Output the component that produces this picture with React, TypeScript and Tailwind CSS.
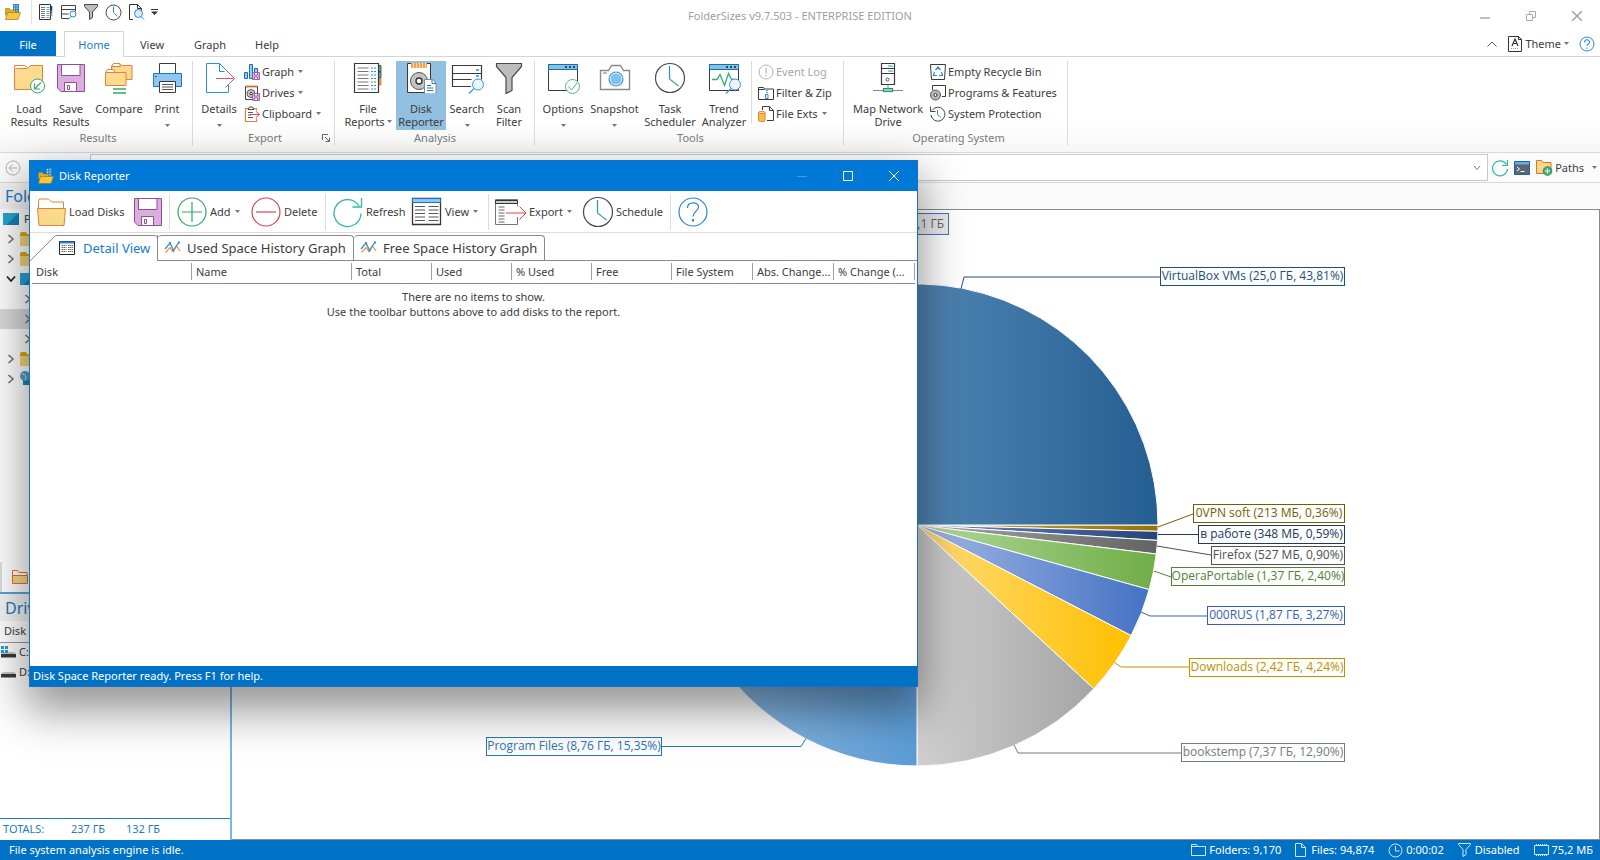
import React from 'react';

type IconProps = { className?: string };

/* ---------- Small shared glyphs ---------- */

const CaretDown: React.FC<IconProps> = ({ className = '' }) => (
  <svg viewBox="0 0 5 3" className={`w-[5px] h-[3px] shrink-0 ${className}`} fill="#777">
    <path d="M0 0h5L2.5 3z" />
  </svg>
);

const ChevronRight = () => (
  <svg viewBox="0 0 8 10" className="w-2 h-[10px] shrink-0" fill="none" stroke="#767676" strokeWidth="1.6">
    <path d="M1.5 1l4.500 4-4.500 4" />
  </svg>
);

const ChevronDown = () => (
  <svg viewBox="0 0 10 8" className="w-[10px] h-2 shrink-0" fill="none" stroke="#222" strokeWidth="1.8">
    <path d="M1 1.500l4 4.500 4-4.500" />
  </svg>
);

const AppIcon: React.FC<IconProps> = ({ className = 'w-4 h-4' }) => (
  <svg viewBox="0 0 16 16" className={className}>
    <rect x="8" y="0" width="6" height="12" fill="#2f86c5" />
    <path d="M9.500 1v10M12 1v10" stroke="#bfe3f7" strokeDasharray="1.500 1" />
    <path d="M0.500 4.500h4l1 1.500h5v5h-10z" fill="#e0ab2c" stroke="#a87610" strokeWidth=".6" />
    <path d="M0.500 15.500l2-7h13l-2.500 7z" fill="#f5c842" stroke="#a87610" strokeWidth=".7" />
  </svg>
);

const FloppyIcon: React.FC<IconProps> = ({ className = 'w-8 h-8' }) => (
  <svg viewBox="0 0 32 32" className={className} stroke="#8d4f97">
    <path d="M2.500 2.500h27v27H6l-3.500-3.500z" fill="#dcaee0" />
    <path d="M6.500 2.500h18.500v11H6.500z" fill="#fff" />
    <path d="M9.500 20.500h12v9h-12z" fill="#fff" />
    <path d="M12.500 23.500h2v4h-2z" fill="#fff" />
  </svg>
);

const ClockIcon: React.FC<IconProps> = ({ className = 'w-8 h-8' }) => (
  <svg viewBox="0 0 32 32" className={className} fill="none">
    <circle cx="16" cy="16" r="14.500" stroke="#4a4a4a" strokeWidth="1.200" />
    <path d="M15.500 4v13" stroke="#2b8fb8" strokeWidth="1.200" />
    <path d="M15.500 17l9 7" stroke="#4ba58c" strokeWidth="1.200" />
  </svg>
);

const FunnelIcon: React.FC<IconProps> = ({ className = 'w-8 h-8' }) => (
  <svg viewBox="0 0 32 32" className={className} fill="#bdbdbd" stroke="#4a4a4a" strokeWidth="1.200">
    <path d="M3.500 1.500h25v3L19 15.500v13l-6 3v-16L3.500 4.500z" />
  </svg>
);

const HelpIcon: React.FC<IconProps> = ({ className = 'w-8 h-8' }) => (
  <svg viewBox="0 0 32 32" className={className} fill="none" stroke="#2b88c8" strokeWidth="1.200">
    <circle cx="16" cy="16" r="14" />
    <path d="M10.500 12c0-7 11-6.500 11-1 0 4.500-5.500 4-5.500 9.500" />
    <path d="M16 23v2.500" strokeWidth="2" />
  </svg>
);

const SmallHelpIcon = () => (
  <svg viewBox="0 0 16 16" className="w-4 h-4" fill="none" stroke="#2b88d8">
    <circle cx="8" cy="8" r="7" />
    <path d="M5.500 6.500c0-3.500 5-3.500 5-.500 0 2-2.500 2-2.500 4M8 11.500v1.200" strokeWidth="1.100" />
  </svg>
);

const RefreshIcon: React.FC<IconProps> = ({ className = 'w-8 h-8' }) => (
  <svg viewBox="0 0 32 32" className={className} fill="none" stroke="#2fb8a8" strokeWidth="1.300">
    <path d="M29 17.500A13.500 13.500 0 1 1 27 10" />
    <path d="M29.500 2v9h-9" />
  </svg>
);

const SmallRefreshIcon = () => (
  <svg viewBox="0 0 18 18" className="w-[18px] h-[18px]" fill="none" stroke="#2fb8a8" strokeWidth="1.200">
    <path d="M16.500 10A7.500 7.500 0 1 1 15.500 5.500" />
    <path d="M16.500 1v5.500H11" />
  </svg>
);

/* ---------- Quick access icons ---------- */

const QuickReportIcon = () => (
  <svg viewBox="0 0 16 16" className="w-4 h-4" fill="none">
    <path d="M1.500.500h11v15h-11z" stroke="#333" />
    <path d="M3 3.500h4M3 5.500h4M3 7.500h4M3 9.500h4M3 11.500h4M3 13.500h4" stroke="#555" strokeWidth=".8" />
    <path d="M8.500 3.500h3M8.500 5.500h3M8.500 7.500h3M8.500 9.500h3M8.500 11.500h3M8.500 13.500h3" stroke="#2b88d8" strokeWidth=".8" />
    <path d="M13.500 2v4" stroke="#333" strokeWidth="1.500" />
    <path d="M13.500 6v3" stroke="#2b88d8" strokeWidth="1.500" />
    <path d="M13.500 9v3" stroke="#f0913a" strokeWidth="1.500" />
  </svg>
);

const QuickSearchIcon = () => (
  <svg viewBox="0 0 17 16" className="w-[17px] h-4" fill="none">
    <path d="M9 14.500H1.500v-13h14v6M1.500 5.500h14M1.500 10h7" stroke="#444" />
    <circle cx="13" cy="10" r="3" stroke="#2b88d8" fill="#fff" />
    <path d="M11 12.500l-3 3" stroke="#2b88d8" />
  </svg>
);

const QuickFunnelIcon = () => (
  <svg viewBox="0 0 16 16" className="w-4 h-4" fill="#bdbdbd" stroke="#444">
    <path d="M1.500.500h13v2L9.500 8v5.500l-3 2V8l-5-5.500z" />
  </svg>
);

const QuickClockIcon = () => (
  <svg viewBox="0 0 17 17" className="w-[17px] h-[17px]" fill="none">
    <circle cx="8.500" cy="8.500" r="7.500" stroke="#444" />
    <path d="M8.500 2.500v6l4 4" stroke="#2b88d8" />
  </svg>
);

const QuickPreviewIcon = () => (
  <svg viewBox="0 0 17 16" className="w-[17px] h-4" fill="none">
    <path d="M5 15.500H1.500V.500h8l4 4v3" stroke="#333" />
    <path d="M9.500.500v4h4" stroke="#333" />
    <circle cx="10.500" cy="9.500" r="4" stroke="#2b88d8" fill="#d9ecfb" />
    <path d="M13 12.500l3 3" stroke="#2b88d8" />
  </svg>
);

/* ---------- Ribbon icons, 32px ---------- */

const LoadIcon = () => (
  <svg viewBox="0 0 32 32" className="w-8 h-8">
    <path d="M1.500 6.500h13l3-3h12v24h-28z" fill="#fbdc8f" stroke="#e2823f" />
    <path d="M1.500 6.500v-3h10l3 1.500" fill="#fff" stroke="#e2823f" />
    <circle cx="24.500" cy="24" r="7" fill="#fff" stroke="#3ba56c" />
    <path d="M28 20.500l-6.500 6.500M21.500 21.500V27H27" fill="none" stroke="#3ba56c" strokeWidth="1.200" />
  </svg>
);

const CompareIcon = () => (
  <svg viewBox="0 0 32 32" className="w-8 h-8" stroke="#e2823f">
    <path d="M8.500 4.500l2.500-3h6l2 2h10v14h-20.500z" fill="#fbdc8f" />
    <path d="M8.500 4.500l2-3h6l1 3z" fill="#fff" />
    <path d="M2.500 10.500h20.500v13H2.500z" fill="#fbdc8f" />
    <path d="M2.500 10.500l2-3h6l1.500 3z" fill="#fff" />
    <path d="M10 27h13M10 31h13" stroke="#3ba56c" strokeWidth="1.400" />
  </svg>
);

const PrintIcon = () => (
  <svg viewBox="0 0 32 32" className="w-8 h-8">
    <path d="M8.500 1.500h16v10h-16z" fill="#fff" stroke="#3a3a3a" />
    <path d="M2.500 11.500h28v13h-28z" fill="#8ec8f2" stroke="#1f78bd" />
    <path d="M4 14.500h2" stroke="#1f5f9d" />
    <path d="M8.500 19.500h16v11h-16z" fill="#fff" stroke="#3a3a3a" />
    <path d="M11 22.500h11M11 25h11M11 27.500h11" stroke="#555" />
  </svg>
);

const DetailsIcon = () => (
  <svg viewBox="0 0 32 32" className="w-8 h-8" fill="none">
    <path d="M25.500 22v8.500h-22v-29h13l6 6" stroke="#2598c8" />
    <path d="M16.500 1.500v8h5" stroke="#2598c8" />
    <path d="M13 16.500h17.500M22.500 7.500l9 9-9 9" stroke="#dd5560" />
  </svg>
);

const FileReportsIcon = () => (
  <svg viewBox="0 0 32 32" className="w-8 h-8" fill="none">
    <path d="M26 3.500h3v6h-3z" fill="#5cc08c" stroke="#333" strokeWidth=".8" />
    <path d="M26 10h3v6h-3z" fill="#5aaee8" stroke="#333" strokeWidth=".8" />
    <path d="M26 17h3v6h-3z" fill="#f3a44d" stroke="#c77a28" strokeWidth=".8" />
    <path d="M2.500 1.500h24v29h-24z" fill="#fff" stroke="#3a3a3a" strokeWidth="1.200" />
    <path d="M5.500 6h11M5.500 9.500h11M5.500 13h11M5.500 16.500h11M5.500 20h11M5.500 23.500h11M5.500 27h11" stroke="#777" />
    <path d="M19 6h5M19 9.500h5M19 13h5M19 16.500h5M19 20h5M19 23.500h5M19 27h5" stroke="#2b88d8" strokeDasharray="2 1" />
  </svg>
);

const DiskReporterIcon = () => (
  <svg viewBox="0 0 32 32" className="w-8 h-8">
    <path d="M2.500 1.500h23v29h-23z" fill="#fff" stroke="#3a3a3a" />
    <path d="M6 1h16v5H6z" fill="#f3a14c" />
    <path d="M8.500 1v5M11.500 1v5M14.500 1v5M17.500 1v5M20.500 1v5" stroke="#fbd9a8" />
    <circle cx="14" cy="19" r="8.500" fill="#c4c4c4" stroke="#555" />
    <circle cx="14" cy="19" r="3" fill="#fff" stroke="#333" strokeWidth="1.400" />
    <path d="M19.500 17.500h8l3.500 3.500v11H19.500z" fill="#fff" stroke="#6f8ea8" />
    <path d="M27 17.500v4h4M22 23.500h4M22 26h6.500M22 28.500h6.500" stroke="#2b78b8" fill="none" />
  </svg>
);

const SearchIcon = () => (
  <svg viewBox="0 0 34 32" className="w-[34px] h-8" fill="none">
    <path d="M21 24.500H2.500v-21h29v14M2.500 11.500h29M2.500 17.500h19" stroke="#3a3a3a" strokeWidth="1.200" />
    <path d="M26 8h3M26 14h3" stroke="#2b88d8" strokeWidth="1.600" />
    <circle cx="28" cy="22.500" r="5.500" stroke="#3a94dc" fill="#eaf5fd" />
    <path d="M24 26.500l-5 5" stroke="#3a94dc" strokeWidth="1.300" />
  </svg>
);

const OptionsIcon = () => (
  <svg viewBox="0 0 34 32" className="w-[34px] h-8" fill="none">
    <path d="M2.500 2.500h29v26h-29z" fill="#fff" stroke="#3a3a3a" />
    <path d="M2.500 2.500h29v5h-29z" fill="#7fc4ee" stroke="#1f6f9d" />
    <path d="M19 5h2M23 5h2M27 5h2" stroke="#123" strokeWidth="1.600" />
    <circle cx="26.500" cy="24.500" r="7" fill="#fff" stroke="#4db880" />
    <path d="M22.500 24.500l3 3.500 5.500-7" stroke="#4db880" />
  </svg>
);

const SnapshotIcon = () => (
  <svg viewBox="0 0 32 32" className="w-8 h-8">
    <path d="M1.500 8.500h8l3-5h9l3 5h6v19h-29z" fill="#fff" stroke="#8a8a8a" strokeWidth="1.400" />
    <path d="M4 11h4" stroke="#777" />
    <circle cx="17" cy="17" r="7" fill="#e8f4fd" stroke="#4a90cc" strokeWidth="1.200" />
    <circle cx="17" cy="17" r="5.500" fill="#7ec1f5" />
  </svg>
);

const TrendIcon = () => (
  <svg viewBox="0 0 34 32" className="w-[34px] h-8" fill="none">
    <path d="M2.500 2.500h29v26h-29z" fill="#fff" stroke="#3a3a3a" />
    <path d="M2.500 2.500h29v5h-29z" fill="#7fc4ee" stroke="#1f6f9d" />
    <path d="M19 5h2M23 5h2M27 5h2" stroke="#123" strokeWidth="1.600" />
    <path d="M5 17.500h5l3-5 4.500 11 4-12 3 6h3" stroke="#34ae74" strokeWidth="1.300" />
    <circle cx="28" cy="22.500" r="5.500" stroke="#3a94dc" fill="#eaf5fd" />
    <path d="M24 26.500l-5 5" stroke="#3a94dc" strokeWidth="1.300" />
  </svg>
);

const NetworkIcon = () => (
  <svg viewBox="0 0 32 32" className="w-8 h-8" fill="none">
    <path d="M9.500 1.500h13v21h-13z" stroke="#3a3a3a" strokeWidth="1.200" />
    <path d="M9.500 6.500h13M9.500 11.500h13" stroke="#3a3a3a" />
    <path d="M16 4h5M16 9h5" stroke="#2b98b8" />
    <circle cx="15.500" cy="17.500" r="1.500" stroke="#555" />
    <path d="M16 23v4M1 28.500h30" stroke="#888" />
    <path d="M11.500 26.500h9v3h-9z" fill="#8adbb2" stroke="#249a62" strokeWidth="1.200" />
  </svg>
);

/* ---------- Ribbon icons, 16px ---------- */

const MiniFloppy = () => (
  <g stroke="#8d4f97" strokeWidth=".8">
    <path d="M8.500 8.500h7v7h-7z" fill="#dcaee0" />
    <path d="M10.500 8.500h3v2.500h-3zM10.500 13h3v2.500h-3z" fill="#fff" />
  </g>
);

const GraphExportIcon = () => (
  <svg viewBox="0 0 16 16" className="w-4 h-4" fill="#8ecbf2" stroke="#1c6fb4">
    <path d="M.500 8.500h3v6h-3zM5.500.500h3v14h-3zM10.500 4.500h3v10h-3z" />
    <MiniFloppy />
  </svg>
);

const DrivesExportIcon = () => (
  <svg viewBox="0 0 16 16" className="w-4 h-4" fill="none">
    <path d="M1.500 1.500h12v13h-12z" stroke="#444" />
    <path d="M2 1.500h11" stroke="#e07b2e" strokeWidth="2" strokeDasharray="2 .5" />
    <circle cx="7" cy="8.500" r="4" stroke="#555" fill="#d0d0d0" />
    <circle cx="7" cy="8.500" r="1.300" stroke="#333" fill="#fff" />
    <MiniFloppy />
  </svg>
);

const ClipboardIcon = () => (
  <svg viewBox="0 0 16 16" className="w-4 h-4" fill="none">
    <path d="M4 2.500H1.500v13h11v-3M10 2.500h2.500v2" stroke="#e2823f" strokeWidth="1.200" />
    <path d="M4 3.500h6l-1.500-2.500h-3z" stroke="#444" />
    <path d="M4 6.500h5M4 9h3M4 11.500h5" stroke="#555" />
    <path d="M6 8.500h9M12 5.500l3.500 3-3.500 3" stroke="#dd4455" />
  </svg>
);

const EventLogIcon = () => (
  <svg viewBox="0 0 16 16" className="w-4 h-4" fill="none" stroke="#b5b5b5">
    <circle cx="8" cy="8" r="7" />
    <path d="M8 3.500v6M8 11v1.500" strokeWidth="1.200" />
  </svg>
);

const FilterZipIcon = () => (
  <svg viewBox="0 0 16 16" className="w-4 h-4" fill="none">
    <path d="M.500 14.500v-12h5l1 1.500h9v10.500z" stroke="#3a3a3a" />
    <path d="M.500 4.500h6" stroke="#3a3a3a" />
    <path d="M9 5v5" stroke="#2b88d8" strokeWidth="1.400" strokeDasharray="1 1" />
    <path d="M7.500 9.500h2.500v4H7.500z" stroke="#2b88d8" />
  </svg>
);

const FileExtsIcon = () => (
  <svg viewBox="0 0 16 16" className="w-4 h-4" fill="none">
    <path d="M4.500 4V.500h7l4 4v10H9M11.500.500v4h4" stroke="#3a3a3a" />
    <path d="M.500 6.500v8c0 1.500 6.500 1.500 6.500 0v-8z" fill="#f8bd57" stroke="#dc8329" />
    <ellipse cx="3.800" cy="6.500" rx="3.200" ry="1.200" fill="#fde2ad" stroke="#dc8329" />
  </svg>
);

const RecycleIcon = () => (
  <svg viewBox="0 0 16 16" className="w-4 h-4" fill="none">
    <path d="M.500.500h15l-1 15h-13z" fill="#fff" stroke="#3a3a3a" />
    <path d="M5.500 6L8 3l2.500 3M4.500 8L3.500 11.500h3.500M11.500 8l1 3.500H9" stroke="#2b88d8" strokeWidth="1.200" />
  </svg>
);

const ProgramsIcon = () => (
  <svg viewBox="0 0 16 16" className="w-4 h-4" fill="none">
    <path d="M2.500 5V.500h13v11H12" stroke="#3a3a3a" />
    <circle cx="5.500" cy="10" r="5" fill="#b9b9b9" stroke="#555" />
    <circle cx="5.500" cy="10" r="1.500" fill="#fff" stroke="#333" />
  </svg>
);

const ProtectionIcon = () => (
  <svg viewBox="0 0 16 16" className="w-4 h-4" fill="none">
    <path d="M2 4.500A7 7 0 1 1 1 9" stroke="#444" />
    <path d="M.500.500v5h5" stroke="#444" />
    <path d="M7.500 4v4.500l3.500 3" stroke="#2b98b8" />
  </svg>
);

/* ---------- Dialog icons ---------- */

const OpenFolderIcon = () => (
  <svg viewBox="0 0 32 32" className="w-8 h-8" stroke="#e2823f">
    <path d="M3.500 13V5.500l1-2.500h9l3 3h12v7" fill="#fff" />
    <path d="M2.500 12.500h28l-1.500 17H4z" fill="#f9d98a" />
  </svg>
);

const AddIcon = () => (
  <svg viewBox="0 0 32 32" className="w-8 h-8" fill="none" stroke="#37a468" strokeWidth="1.200">
    <circle cx="16" cy="16" r="14" />
    <path d="M16 6v20M6 16h20" />
  </svg>
);

const DeleteIcon = () => (
  <svg viewBox="0 0 32 32" className="w-8 h-8" fill="none" stroke="#dd4450" strokeWidth="1.200">
    <circle cx="16" cy="16" r="14" />
    <path d="M6 16h20" />
  </svg>
);

const ViewIcon: React.FC<IconProps> = ({ className = 'w-8 h-8' }) => (
  <svg viewBox="0 0 32 32" className={className} fill="none">
    <path d="M1.500 2.500h28v26h-28z" stroke="#333" strokeWidth="1.300" />
    <path d="M1.500 2.500h28v4h-28z" fill="#8ec8f2" stroke="#1f6fb4" />
    <path d="M4 10.500h10M4 14h10M4 17.500h10M4 21h10M4 24.500h10M17.500 10.500h10M17.500 14h10M17.500 17.500h10M17.500 21h10M17.500 24.500h10" stroke="#555" />
  </svg>
);

const DetailTabIcon = () => (
  <svg viewBox="0 0 16 16" className="w-4 h-4" fill="none">
    <path d="M.500 1.500h15v13h-15z" stroke="#222" />
    <path d="M1 2.500h14" stroke="#2b88d8" strokeWidth="2" />
    <path d="M2.500 5.500h5M2.500 7.500h5M2.500 9.500h5M2.500 11.500h5M9 5.500h5M9 7.500h5M9 9.500h5M9 11.500h5" stroke="#666" strokeDasharray="1.500 .5" />
  </svg>
);

const ExportIcon = () => (
  <svg viewBox="0 0 34 32" className="w-[34px] h-8" fill="none">
    <path d="M24.500 21v7.500h-22v-25h22v7" stroke="#777" />
    <path d="M2.500 4.500h22v3h-22z" fill="#c8cfc8" stroke="#333" />
    <path d="M5.500 11h6M5.500 14h6M5.500 17h6M5.500 20h6M5.500 23h6M5.500 26h6" stroke="#666" />
    <path d="M13 17h19M26.500 10.500l6.500 6.500-6.500 6.500" stroke="#dd4450" />
  </svg>
);

const HistoryIcon = () => (
  <svg viewBox="0 0 17 16" className="w-[17px] h-4" fill="none" strokeWidth="1.300">
    <path d="M1.500 12.500L6 7.500l3 4L12.500 6l3.500 5" stroke="#f09a4a" />
    <path d="M1 9l5-6 3.500 7.500L15 2" stroke="#3a8fc8" />
    <path d="M5 2h2v2H5zM14 1.500h2v2h-2zM8.500 9.500h2v2h-2z" fill="#3a8fc8" />
  </svg>
);

/* ---------- Tree and status icons ---------- */

const TreeFolder = () => (
  <svg viewBox="0 0 16 14" className="w-4 h-[14px] shrink-0">
    <path d="M0 2l1-2h5l1 2h9v12H0z" fill="#e0a712" />
    <path d="M0 4h16v10H0z" fill="#f5d67b" />
  </svg>
);

const TreeMonitor = () => (
  <svg viewBox="0 0 16 14" className="w-4 h-[14px] shrink-0">
    <path d="M0 1h16v12H0z" fill="#1580b4" />
    <path d="M0 1h16L3 13H0z" fill="#27a5d0" />
  </svg>
);

const TreeNetwork = () => (
  <svg viewBox="0 0 16 16" className="w-4 h-4 shrink-0">
    <path d="M3 6h13v8H3z" fill="#1a86b0" />
    <circle cx="5" cy="5" r="5" fill="#4f9fcb" />
    <path d="M2 3c3 0 5 2 3 6" stroke="#cfe8f5" fill="none" />
  </svg>
);

const DriveIcon: React.FC<{ system?: boolean }> = ({ system }) => (
  <svg viewBox="0 0 16 12" className="w-4 h-3 shrink-0">
    <path d="M2 6h11l2 2H0z" fill="#c4c4c4" />
    <path d="M0 8h15v3.500H0z" fill="#3a3a3a" />
    {system && <path d="M0 0h3v3H0zM4 0h3v3H4zM0 4h3v3H0zM4 4h3v3H4z" fill="#2a9ae0" />}
  </svg>
);

/* ---------- Ribbon building blocks ---------- */

interface BigButtonProps {
  icon: React.ReactNode;
  lines: string[];
  width: string;
  menu?: boolean;
  inlineMenu?: boolean;
  active?: boolean;
}

const BigButton: React.FC<BigButtonProps> = ({ icon, lines, width, menu, inlineMenu, active }) => (
  <button
    type="button"
    className={`${width} h-[69px] flex flex-col items-center pt-[1px] leading-[13px] whitespace-nowrap ${active ? 'bg-[#92c0e0]' : ''}`}
  >
    <span className="h-10 flex items-start justify-center">{icon}</span>
    {lines.map((line, i) => (
      <span key={line} className="flex items-center gap-0.5">
        {line}
        {inlineMenu && i === lines.length - 1 && <CaretDown />}
      </span>
    ))}
    {menu && <CaretDown className="mt-[9px]" />}
  </button>
);

const SmallButton: React.FC<{ icon: React.ReactNode; label: string; menu?: boolean; disabled?: boolean }> = ({
  icon,
  label,
  menu,
  disabled,
}) => (
  <button
    type="button"
    disabled={disabled}
    className={`h-[21px] flex items-center gap-0.5 whitespace-nowrap ${disabled ? 'text-[#a6a6a6]' : ''}`}
  >
    {icon}
    <span>{label}</span>
    {menu && <CaretDown className="ml-0.5" />}
  </button>
);

const Group: React.FC<{ title: string; className: string; launcher?: boolean; children: React.ReactNode }> = ({
  title,
  className,
  launcher,
  children,
}) => (
  <section className={`h-[85px] border-r border-[#dcdcdc] flex flex-col ${className}`}>
    <div className="flex items-start">{children}</div>
    <div className="relative h-4 flex items-center justify-center text-[#7a7a7a]">
      {title}
      {launcher && (
        <button type="button" aria-label="Export settings" className="absolute right-1 top-1">
          <svg viewBox="0 0 8 8" className="w-2 h-2" fill="none" stroke="#666">
            <path d="M.500 6V.500H6M3 3l4 4M7.500 3.500v4h-4" />
          </svg>
        </button>
      )}
    </div>
  </section>
);

/* ---------- Chart ---------- */

const CX = 685;
const CY = 315;
const R = 241;

const slices = [
  { id: 'vpn', value: 0.42, from: '#c9a84e', to: '#997300' },
  { id: 'work', value: 0.6, from: '#6f8cc4', to: '#264478' },
  { id: 'firefox', value: 0.9, from: '#a8a8a8', to: '#636363' },
  { id: 'opera', value: 2.4, from: '#b2d99b', to: '#70ad47' },
  { id: 'rus', value: 3.27, from: '#a3b8e4', to: '#4472c4' },
  { id: 'downloads', value: 4.3, from: '#ffdc7a', to: '#ffc000' },
  { id: 'books', value: 13.11, from: '#cfcfcf', to: '#a5a5a5' },
  { id: 'program', value: 15.35, from: '#8fbbe3', to: '#5b9bd5' },
  { id: 'windows', value: 15.84, from: '#f5b183', to: '#ed7d31' },
  { id: 'vbox', value: 43.81, from: '#78aad4', to: '#255e91' },
];

// x and w are the label box, y its middle; line is the leader from the pie
const labels = [
  { text: 'VirtualBox VMs (25,0 ГБ, 43,81%)', x: 928, w: 185, y: 66, color: '#1f4e79', line: 'M729 79l3-12h196' },
  { text: '0VPN soft (213 МБ, 0,36%)', x: 961, w: 152, y: 303, color: '#7a5c00', line: 'M926 317l35-13' },
  { text: 'в работе (348 МБ, 0,59%)', x: 966, w: 147, y: 324, color: '#1f3864', line: 'M926 324.500h40' },
  { text: 'Firefox (527 МБ, 0,90%)', x: 979, w: 134, y: 345, color: '#505050', line: 'M925 336l54 9' },
  { text: 'OperaPortable (1,37 ГБ, 2,40%)', x: 939, w: 174, y: 366, color: '#548235', line: 'M922 361l17 6' },
  { text: '000RUS (1,87 ГБ, 3,27%)', x: 975, w: 138, y: 405, color: '#3b5fae', line: 'M909 402l9 4h57' },
  { text: 'Downloads (2,42 ГБ, 4,24%)', x: 957, w: 156, y: 457, color: '#bf9000', line: 'M882 452l7 5h68' },
  { text: 'bookstemp (7,37 ГБ, 12,90%)', x: 949, w: 164, y: 542, color: '#7b7b7b', line: 'M782 535l4 8h163' },
  { text: 'Program Files (8,76 ГБ, 15,35%)', x: 254, w: 176, y: 536, color: '#2e75b6', line: 'M430 536.500h139l5-8' },
];

const PieChart = () => {
  const total = slices.reduce((sum, s) => sum + s.value, 0);
  let angle = 0;

  return (
    <svg
      viewBox="0 0 1367 629"
      className="w-full h-full block font-['Open_Sans','Noto_Sans',sans-serif]"
      role="img"
      aria-label="Folder sizes"
    >
      <defs>
        {slices.map(s => (
          <linearGradient key={s.id} id={`fill-${s.id}`}>
            <stop offset="0" stopColor={s.from} />
            <stop offset="1" stopColor={s.to} />
          </linearGradient>
        ))}
      </defs>
      {slices.map(s => {
        const start = angle;
        angle += (s.value / total) * Math.PI * 2;
        const x1 = CX + R * Math.cos(start);
        const y1 = CY + R * Math.sin(start);
        const x2 = CX + R * Math.cos(angle);
        const y2 = CY + R * Math.sin(angle);
        return (
          <path
            key={s.id}
            d={`M${CX} ${CY}L${x1} ${y1}A${R} ${R} 0 0 1 ${x2} ${y2}Z`}
            fill={`url(#fill-${s.id})`}
            stroke="#fff"
            strokeWidth="1"
          />
        );
      })}
      <rect x="653.5" y="3.5" width="63" height="21" fill="#ececf0" stroke="#4472c4" />
      <text x="712" y="18" textAnchor="end" fontSize="12" fill="#666">57,1 ГБ</text>
      {labels.map(l => (
        <g key={l.text}>
          <path d={l.line} fill="none" stroke={l.color} />
          <rect x={l.x + 0.5} y={l.y - 8.5} width={l.w - 1} height="18" fill="#fcfdfd" stroke={l.color} />
          <text x={l.x + l.w / 2} y={l.y + 4} textAnchor="middle" fontSize="12" fill={l.color}>{l.text}</text>
        </g>
      ))}
    </svg>
  );
};

/* ---------- Dialog ---------- */

const columns = [
  { title: 'Disk', width: 'w-[160px]' },
  { title: 'Name', width: 'w-[160px]' },
  { title: 'Total', width: 'w-[80px]' },
  { title: 'Used', width: 'w-[80px]' },
  { title: '% Used', width: 'w-[80px]' },
  { title: 'Free', width: 'w-[80px]' },
  { title: 'File System', width: 'w-[81px]' },
  { title: 'Abs. Change...', width: 'w-[81px]' },
  { title: '% Change (...', width: '' },
];

const ToolSeparator = () => <span className="w-px h-9 bg-[#dcdcdc] shrink-0" />;

const ToolButton: React.FC<{ icon: React.ReactNode; label: string; width: string; menu?: boolean; hideLabel?: boolean }> = ({
  icon,
  label,
  width,
  menu,
  hideLabel,
}) => (
  <button
    type="button"
    aria-label={hideLabel ? label : undefined}
    className={`${width} h-9 flex items-center gap-0.5 whitespace-nowrap shrink-0`}
  >
    {icon}
    {!hideLabel && <span>{label}</span>}
    {menu && <CaretDown className="ml-0.5" />}
  </button>
);

const DiskReporterDialog = () => (
  <div
    role="dialog"
    aria-label="Disk Reporter"
    className="absolute left-[29px] top-[160px] w-[889px] h-[527px] flex flex-col bg-white border border-[#1a6fc0] shadow-[0_20px_42px_4px_rgba(0,0,0,0.42)]"
  >
    <header className="h-[30px] bg-[#0078d7] flex items-center pl-2 text-white shrink-0">
      <AppIcon />
      <h2 className="ml-[5px] flex-1">Disk Reporter</h2>
      <button type="button" aria-label="Minimize" className="w-[46px] h-full flex items-center justify-center">
        <svg viewBox="0 0 10 10" className="w-[10px] h-[10px]" stroke="#3f9be6"><path d="M0 5.500h10" /></svg>
      </button>
      <button type="button" aria-label="Maximize" className="w-[46px] h-full flex items-center justify-center">
        <svg viewBox="0 0 10 10" className="w-[10px] h-[10px]" stroke="#fff" fill="none"><path d="M.500.500h9v9h-9z" /></svg>
      </button>
      <button type="button" aria-label="Close" className="w-[46px] h-full flex items-center justify-center">
        <svg viewBox="0 0 10 10" className="w-[10px] h-[10px]" stroke="#fff"><path d="M0 0l10 10M10 0L0 10" /></svg>
      </button>
    </header>

    <div className="h-[42px] border-b border-[#dcdcdc] flex items-center pl-[5px] shrink-0">
      <ToolButton icon={<OpenFolderIcon />} label="Load Disks" width="w-[97px]" />
      <ToolButton icon={<FloppyIcon />} label="Save" width="w-[37px]" hideLabel />
      <ToolSeparator />
      <ToolButton icon={<span className="pl-1.5"><AddIcon /></span>} label="Add" width="w-[80px]" menu />
      <ToolButton icon={<DeleteIcon />} label="Delete" width="w-[75px]" />
      <ToolSeparator />
      <ToolButton icon={<span className="pl-1.5"><RefreshIcon /></span>} label="Refresh" width="w-[85px]" />
      <ToolButton icon={<ViewIcon />} label="View" width="w-[77px]" menu />
      <ToolSeparator />
      <ToolButton icon={<span className="pl-1"><ExportIcon /></span>} label="Export" width="w-[93px]" menu />
      <ToolButton icon={<ClockIcon />} label="Schedule" width="w-[88px]" />
      <ToolSeparator />
      <ToolButton icon={<span className="pl-1.5"><HelpIcon /></span>} label="Help" width="w-[40px]" hideLabel />
    </div>

    <div role="tablist" className="h-[28px] pt-0.5 border-b border-[#8a8a8a] flex items-end text-[13px] shrink-0">
      <button
        type="button"
        role="tab"
        aria-selected="true"
        className="relative w-[128px] h-[26px] -mb-px pl-[29px] bg-white border-r border-[#8a8a8a] flex items-center gap-2 text-[#1a7ad0] whitespace-nowrap"
      >
        <svg viewBox="0 0 128 26" className="absolute left-0 top-0 w-[128px] h-[26px]" fill="none" stroke="#8a8a8a">
          <path d="M0 26L24 2Q25.500.500 27 .500H125L128 3" />
        </svg>
        <DetailTabIcon />
        Detail View
      </button>
      <button
        type="button"
        role="tab"
        aria-selected="false"
        className="w-[196px] h-[25px] pl-1.5 border-t border-r border-[#8a8a8a] rounded-t-[4px] flex items-center gap-1.5 whitespace-nowrap"
      >
        <HistoryIcon />
        Used Space History Graph
      </button>
      <button
        type="button"
        role="tab"
        aria-selected="false"
        className="w-[191px] h-[25px] pl-1.5 border-t border-r border-[#8a8a8a] rounded-t-[4px] flex items-center gap-1.5 whitespace-nowrap"
      >
        <HistoryIcon />
        Free Space History Graph
      </button>
    </div>

    <div className="flex-1 pl-0.5 pr-0.5">
      <table className="w-full table-fixed">
        <thead>
          <tr className="border-b border-[#8a8a8a]">
            {columns.map(col => (
              <th key={col.title} className={`${col.width} h-[22px] p-0 font-normal text-left`}>
                <div className="h-[17px] pl-1 border-r border-[#a0a0a0] flex items-center whitespace-nowrap overflow-hidden">
                  {col.title}
                </div>
              </th>
            ))}
          </tr>
        </thead>
        <tbody>
          <tr>
            <td colSpan={9} className="pt-[5px] text-center leading-[15px]">
              There are no items to show.
              <br />
              Use the toolbar buttons above to add disks to the report.
            </td>
          </tr>
        </tbody>
      </table>
    </div>

    <footer className="h-5 bg-[#0072c6] text-white flex items-center pl-[3px] shrink-0">
      Disk Space Reporter ready. Press F1 for help.
    </footer>
  </div>
);

/* ---------- Page ---------- */

const ribbonTabs = [
  { label: 'View', width: 'w-[56px]' },
  { label: 'Graph', width: 'w-[60px]' },
  { label: 'Help', width: 'w-[54px]' },
];

const App: React.FC = () => (
  <div className="relative min-h-screen flex flex-col bg-white text-[11px] leading-4 text-[#3c3c3c] font-['Noto_Sans','Open_Sans',sans-serif] overflow-hidden">
    {/* Title bar */}
    <header className="h-[31px] grid grid-cols-[1fr_auto_1fr] items-center shrink-0">
      <div className="h-full pl-[5px] pb-2 flex items-center">
        <AppIcon />
        <span className="w-px h-6 bg-[#e2e2e2] ml-2.5 mr-1.5" />
        <div className="flex items-center gap-1.5">
          <button type="button" aria-label="File reports"><QuickReportIcon /></button>
          <button type="button" aria-label="Search"><QuickSearchIcon /></button>
          <button type="button" aria-label="Filter"><QuickFunnelIcon /></button>
          <button type="button" aria-label="Scheduler"><QuickClockIcon /></button>
          <button type="button" aria-label="Preview"><QuickPreviewIcon /></button>
          <button type="button" aria-label="Customize">
            <svg viewBox="0 0 7 6" className="w-[7px] h-1.5" fill="#333"><path d="M0 0h7v1H0zM0 2.500h7L3.500 6z" /></svg>
          </button>
        </div>
      </div>
      <h1 className="text-[#a0a0a0]">FolderSizes v9.7.503 - ENTERPRISE EDITION</h1>
      <div className="h-full flex justify-end">
        <button type="button" aria-label="Minimize" className="w-[46px] flex items-center justify-center">
          <svg viewBox="0 0 10 10" className="w-[10px] h-[10px]" stroke="#aaa"><path d="M0 7h10" strokeWidth="1.500" /></svg>
        </button>
        <button type="button" aria-label="Restore" className="w-[46px] flex items-center justify-center">
          <svg viewBox="0 0 10 10" className="w-[10px] h-[10px]" stroke="#aaa" fill="none">
            <path d="M.500 3.500h6v6h-6zM3.500 3.500v-3h6v6h-3" />
          </svg>
        </button>
        <button type="button" aria-label="Close" className="w-[46px] flex items-center justify-center">
          <svg viewBox="0 0 10 10" className="w-[10px] h-[10px]" stroke="#999" strokeWidth="1.300"><path d="M0 0l10 10M10 0L0 10" /></svg>
        </button>
      </div>
    </header>

    {/* Ribbon tabs */}
    <nav className="h-[26px] border-b border-[#d5d5d5] flex items-end shrink-0">
      <button type="button" className="w-14 h-[25px] pt-0.5 bg-[#0072c6] text-white">File</button>
      <button type="button" className="w-[60px] h-[26px] ml-2 -mb-px pt-px bg-white border border-b-0 border-[#d5d5d5] text-[#1a7ad0]">
        Home
      </button>
      {ribbonTabs.map(tab => (
        <button key={tab.label} type="button" className={`${tab.width} h-[25px] pt-0.5`}>{tab.label}</button>
      ))}
      <div className="ml-auto h-6 pb-px flex items-center pr-[5px]">
        <button type="button" aria-label="Collapse ribbon" className="mr-[11px]">
          <svg viewBox="0 0 10 6" className="w-[10px] h-1.5" fill="none" stroke="#555"><path d="M.500 5.500L5 1l4.500 4.500" /></svg>
        </button>
        <button type="button" className="flex items-center gap-[3px]">
          <svg viewBox="0 0 14 16" className="w-3.5 h-4" fill="none" stroke="#333">
            <path d="M.500.500h10l3 3v12H.500zM10.500.500v3h3" />
            <path d="M4 10l3-7 3 7M5 7.500h4" strokeWidth="1.200" />
            <path d="M3 12.500h8" stroke="#999" strokeDasharray="1 1" />
          </svg>
          <span>Theme</span>
          <CaretDown />
        </button>
        <button type="button" aria-label="Help" className="ml-2.5"><SmallHelpIcon /></button>
      </div>
    </nav>

    {/* Ribbon */}
    <div className="h-[95px] pt-1 bg-[linear-gradient(#fff_70%,#f6f6f6)] flex items-start shrink-0">
      <Group title="Results" className="pl-2 pr-1">
        <BigButton icon={<LoadIcon />} lines={['Load', 'Results']} width="w-[42px]" />
        <BigButton icon={<FloppyIcon />} lines={['Save', 'Results']} width="w-[42px]" />
        <BigButton icon={<CompareIcon />} lines={['Compare']} width="w-[54px]" />
        <BigButton icon={<PrintIcon />} lines={['Print']} width="w-[42px]" menu />
      </Group>
      <Group title="Export" className="w-[142px] pl-[3px]" launcher>
        <BigButton icon={<DetailsIcon />} lines={['Details']} width="w-[46px]" menu />
        <div className="pl-0.5">
          <SmallButton icon={<GraphExportIcon />} label="Graph" menu />
          <SmallButton icon={<DrivesExportIcon />} label="Drives" menu />
          <SmallButton icon={<ClipboardIcon />} label="Clipboard" menu />
        </div>
      </Group>
      <Group title="Analysis" className="w-[200px] pl-[5px] pr-1">
        <BigButton icon={<FileReportsIcon />} lines={['File', 'Reports']} width="w-[56px]" inlineMenu />
        <BigButton icon={<DiskReporterIcon />} lines={['Disk', 'Reporter']} width="w-[50px]" active />
        <BigButton icon={<SearchIcon />} lines={['Search']} width="w-[42px]" menu />
        <BigButton icon={<FunnelIcon />} lines={['Scan', 'Filter']} width="w-[42px]" />
      </Group>
      <Group title="Tools" className="w-[309px] pl-[3px]">
        <BigButton icon={<OptionsIcon />} lines={['Options']} width="w-[50px]" menu />
        <BigButton icon={<SnapshotIcon />} lines={['Snapshot']} width="w-[53px]" menu />
        <BigButton icon={<ClockIcon />} lines={['Task', 'Scheduler']} width="w-[58px]" />
        <BigButton icon={<TrendIcon />} lines={['Trend', 'Analyzer']} width="w-[50px]" />
        <div className="ml-0.5 pl-1.5 border-l border-[#dcdcdc]">
          <SmallButton icon={<EventLogIcon />} label="Event Log" disabled />
          <SmallButton icon={<FilterZipIcon />} label="Filter & Zip" />
          <SmallButton icon={<FileExtsIcon />} label="File Exts" menu />
        </div>
      </Group>
      <Group title="Operating System" className="w-[224px] pl-1.5">
        <BigButton icon={<NetworkIcon />} lines={['Map Network', 'Drive']} width="w-[76px]" />
        <div className="pl-1">
          <SmallButton icon={<RecycleIcon />} label="Empty Recycle Bin" />
          <SmallButton icon={<ProgramsIcon />} label="Programs & Features" />
          <SmallButton icon={<ProtectionIcon />} label="System Protection" />
        </div>
      </Group>
    </div>

    {/* Address bar */}
    <div className="h-[31px] border-y border-[#d8d8d8] bg-[#fbfbfb] flex items-center pl-[5px] shrink-0">
      <button type="button" aria-label="Back">
        <svg viewBox="0 0 16 16" className="w-4 h-4" fill="none" stroke="#b0b0b0">
          <circle cx="8" cy="8" r="7" />
          <path d="M12 8H4M7.500 4.500L4 8l3.500 3.500" />
        </svg>
      </button>
      <div className="ml-[69px] flex-1 h-[27px] border border-[#c9c9c9] bg-white flex items-center">
        <input type="text" aria-label="Path" className="flex-1 h-full px-2 bg-transparent outline-none" />
        <button type="button" aria-label="Path history" className="px-1.5">
          <svg viewBox="0 0 8 6" className="w-2 h-1.5" fill="none" stroke="#777"><path d="M1 1l3 3.500L7 1" /></svg>
        </button>
      </div>
      <button type="button" aria-label="Refresh" className="ml-[3px]"><SmallRefreshIcon /></button>
      <button type="button" aria-label="Command prompt" className="ml-[5px]">
        <svg viewBox="0 0 16 16" className="w-4 h-4">
          <path d="M.500 1.500h15v13H.500z" fill="#5c6670" stroke="#1f5f9d" />
          <path d="M1 2h14v2.500H1z" fill="#5ab0ee" />
          <path d="M3 7l2.500 2L3 11M6.500 11.500h4" stroke="#fff" fill="none" />
        </svg>
      </button>
      <button type="button" className="ml-1.5 pr-[3px] flex items-center gap-0.5">
        <svg viewBox="0 0 17 17" className="w-[17px] h-[17px]">
          <path d="M.500 14.500v-13h5l1.500 2h8v11z" fill="#fbd78a" stroke="#e0702e" />
          <circle cx="11.500" cy="12" r="4.300" fill="#3fae73" stroke="#2a8f5a" />
          <path d="M11.500 9.500v5M9 12h5" stroke="#fff" strokeWidth="1.200" />
        </svg>
        <span>Paths</span>
        <CaretDown className="ml-1.5" />
      </button>
    </div>

    {/* Work area */}
    <div className="flex-1 flex min-h-0">
      <aside className="w-[230px] flex flex-col shrink-0">
        <section className="flex-1 flex flex-col">
          <h2 className="h-[26px] pl-[5px] bg-[#f3f3f3] flex items-center text-[16px] text-[#1f7ac4]">Folders</h2>
          <ul className="flex-1">
            <li className="h-5 pl-[3px] flex items-center gap-[5px]"><TreeMonitor />PC</li>
            <li className="h-5 pl-[7px] flex items-center gap-[5px]"><ChevronRight /><TreeFolder /></li>
            <li className="h-5 pl-[7px] flex items-center gap-[5px]"><ChevronRight /><TreeFolder /></li>
            <li className="h-5 pl-[6px] flex items-center gap-1"><ChevronDown /><TreeMonitor /></li>
            <li className="h-5 pl-6 flex items-center"><ChevronRight /></li>
            <li className="h-5 pl-6 flex items-center bg-[#d9d9d9]"><ChevronRight /></li>
            <li className="h-5 pl-6 flex items-center"><ChevronRight /></li>
            <li className="h-5 pl-[7px] flex items-center gap-[5px]"><ChevronRight /><TreeFolder /></li>
            <li className="h-5 pl-[7px] flex items-center gap-[5px]"><ChevronRight /><TreeNetwork /></li>
          </ul>
          <div className="h-[30px] pl-2.5 flex items-center border-l-2 border-[#dedede]">
            <svg viewBox="0 0 16 14" className="w-4 h-3.5" stroke="#e0702e">
              <path d="M.500 6V.500h5l1.500 2h8V6" fill="#fff" />
              <path d="M.500 5.500h15v8H.500z" fill="#f9d98a" />
            </svg>
          </div>
        </section>
        <section className="h-[248px] border-t-2 border-[#5ba3dd] flex flex-col">
          <h2 className="h-[27px] pl-[5px] bg-[#f3f3f3] flex items-center text-[16px] text-[#1f7ac4] shrink-0">Drives</h2>
          <table className="w-full">
            <thead>
              <tr className="h-[21px] border-b border-[#999]">
                <th className="p-0 pl-1 text-left font-normal">Disk</th>
              </tr>
            </thead>
            <tbody>
              <tr className="h-5">
                <td className="p-0"><span className="flex items-center gap-0.5 pl-px"><DriveIcon system />C:</span></td>
              </tr>
              <tr className="h-5">
                <td className="p-0"><span className="flex items-center gap-0.5 pl-px"><DriveIcon />D:</span></td>
              </tr>
            </tbody>
          </table>
          <div className="mt-auto h-[22px] pb-0.5 pl-[3px] border-t border-[#1f7ac4] text-[#1f7ac4] flex items-center">
            <span className="w-[68px]">TOTALS:</span>
            <span className="w-[55px]">237 ГБ</span>
            <span>132 ГБ</span>
          </div>
        </section>
      </aside>
      <main className="flex-1 flex flex-col border-l-2 border-[#7ab5e4]">
        <div className="h-[26px] bg-[#fbfbfb] shrink-0" />
        <div className="flex-1 min-h-0 border-t border-r border-b border-[#8a8a8a]">
          <PieChart />
        </div>
      </main>
    </div>

    {/* Status bar */}
    <footer className="h-5 bg-[#0072c6] text-white flex items-center pl-[9px] pr-[7px] shrink-0">
      <span className="flex-1">File system analysis engine is idle.</span>
      <div className="flex items-center gap-3.5">
        <span className="flex items-center gap-[3px]">
          <svg viewBox="0 0 15 14" className="w-[15px] h-3.5" fill="none" stroke="#cfe6f7"><path d="M.500 12.500v-11h5l1 2h8v9zM.500 3.500h6" /></svg>
          Folders: 9,170
        </span>
        <span className="flex items-center gap-1">
          <svg viewBox="0 0 12 14" className="w-3 h-3.5" fill="none" stroke="#cfe6f7"><path d="M.500.500h6l4 4v9H.500zM6.500.500v4h4" /></svg>
          Files: 94,874
        </span>
        <span className="flex items-center gap-[3px]">
          <svg viewBox="0 0 15 15" className="w-[15px] h-[15px]" fill="none" stroke="#cfe6f7"><circle cx="7.500" cy="7.500" r="6.500" /><path d="M7.500 3v5h4" /></svg>
          0:00:02
        </span>
        <span className="flex items-center gap-1">
          <svg viewBox="0 0 13 14" className="w-[13px] h-3.5" fill="none" stroke="#cfe6f7"><path d="M.500.500h12v1l-4.500 5v5l-3 2v-7L.500 1.500z" /></svg>
          Disabled
        </span>
        <span className="flex items-center gap-[3px]">
          <svg viewBox="0 0 15 12" className="w-[15px] h-3" fill="none" stroke="#cfe6f7"><path d="M.500 1.500h14v9H.500z" /><path d="M2 1h11M2 11h11" strokeWidth="2" strokeDasharray="1 1" /></svg>
          75,2 МБ
        </span>
      </div>
    </footer>

    <DiskReporterDialog />
  </div>
);

export default App;
